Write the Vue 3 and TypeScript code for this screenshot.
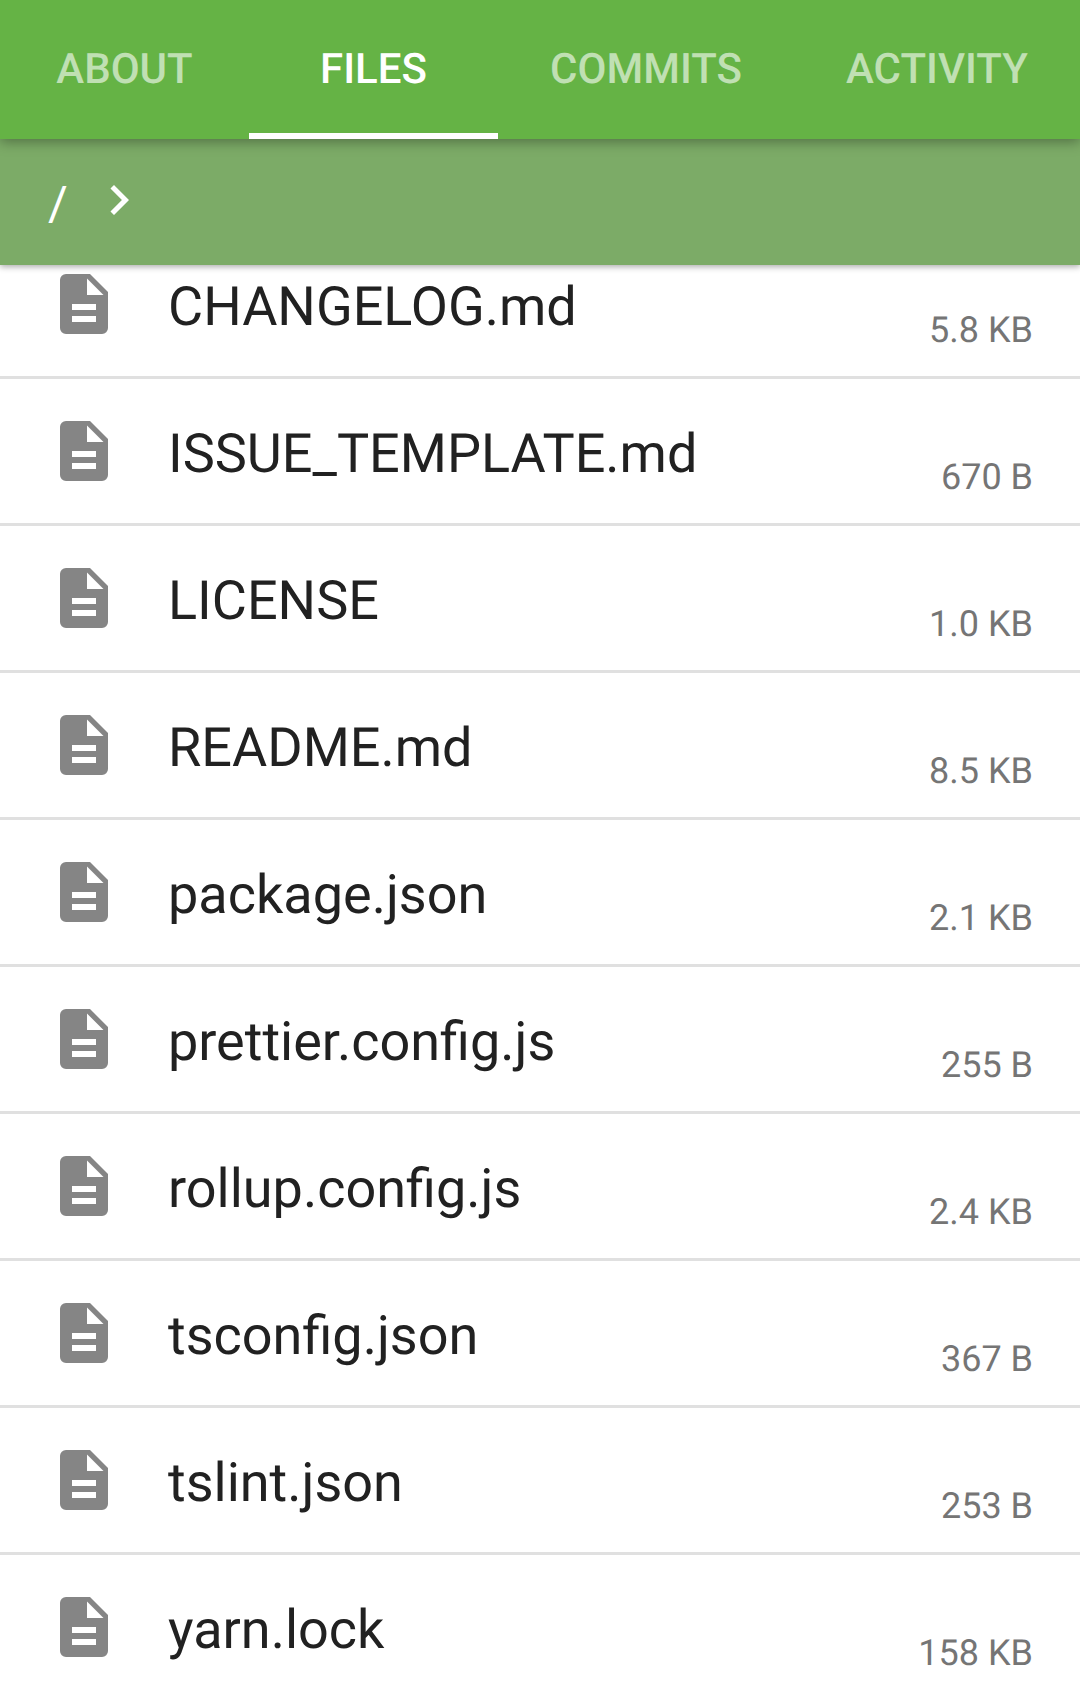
<script setup lang="ts">
interface FileEntry {
  name: string
  size: string
}

const tabs: string[] = ['About', 'Files', 'Commits', 'Activity']
const activeTab = 'Files'

const files: FileEntry[] = [
  { name: 'CHANGELOG.md', size: '5.8 KB' },
  { name: 'ISSUE_TEMPLATE.md', size: '670 B' },
  { name: 'LICENSE', size: '1.0 KB' },
  { name: 'README.md', size: '8.5 KB' },
  { name: 'package.json', size: '2.1 KB' },
  { name: 'prettier.config.js', size: '255 B' },
  { name: 'rollup.config.js', size: '2.4 KB' },
  { name: 'tsconfig.json', size: '367 B' },
  { name: 'tslint.json', size: '253 B' },
  { name: 'yarn.lock', size: '158 KB' },
]
</script>

<template>
  <div class="screen">
    <nav class="tabs">
      <a v-for="tab in tabs" :key="tab" class="tab" :class="{ active: tab === activeTab }">{{ tab }}</a>
    </nav>
    <div class="path">
      <span class="root">/</span>
      <svg class="chevron" viewBox="0 0 24 24"><path d="M10 6L8.59 7.41 13.17 12l-4.58 4.59L10 18l6-6z" /></svg>
    </div>
    <ul class="files">
      <li v-for="file in files" :key="file.name" class="file">
        <svg class="icon" viewBox="0 0 24 24">
          <path fill-rule="evenodd" d="M6 2h8l6 6v12a2 2 0 0 1-2 2H6a2 2 0 0 1-2-2V4a2 2 0 0 1 2-2zM13 3.5V9h5.5zM8 12v2h8v-2zM8 16v2h8v-2z" />
        </svg>
        <span class="name">{{ file.name }}</span>
        <span class="size">{{ file.size }}</span>
      </li>
    </ul>
  </div>
</template>

<style>
body {
  margin: 0;
}
</style>

<style scoped>
.screen {
  display: flex;
  flex-direction: column;
  width: 1080px;
  height: 1699px;
  overflow: hidden;
  background: #fff;
  font-family: Roboto, sans-serif;
  text-rendering: geometricPrecision;
}
.tabs {
  position: relative;
  z-index: 2;
  flex: none;
  display: grid;
  grid-template-columns: 249px 249px 296px 286px;
  height: 139px;
  background: #65b345;
  box-shadow: 0 3px 12px rgba(0, 0, 0, 0.34);
}
.tab {
  box-sizing: border-box;
  border-bottom: 6px solid transparent;
  padding-top: 45px;
  color: rgba(255, 255, 255, 0.6);
  font-size: 42px;
  font-weight: 500;
  line-height: 50px;
  text-align: center;
  text-transform: uppercase;
}
.tab.active {
  color: #fff;
  border-bottom-color: #fff;
}
.path {
  position: relative;
  z-index: 1;
  flex: none;
  display: flex;
  align-items: center;
  height: 126px;
  box-sizing: border-box;
  padding-left: 48px;
  background: #7cab67;
  color: #fff;
  box-shadow: 0 2px 6px rgba(0, 0, 0, 0.32);
}
.root {
  padding-top: 4px;
  font-size: 48px;
  line-height: 56px;
}
.chevron {
  width: 60px;
  height: 60px;
  margin: 0 0 4px 21px;
  fill: #fff;
}
.files {
  flex: none;
  margin: -33px 0 0;
  padding: 0;
  list-style: none;
}
.file {
  display: flex;
  align-items: center;
  height: 144px;
  padding: 0 47px 0 48px;
  border-bottom: 3px solid #e0e0e0;
}
.icon {
  flex: none;
  width: 72px;
  height: 72px;
  fill: #858585;
}
.name {
  flex: 1;
  margin-left: 48px;
  padding-top: 8px;
  color: #212121;
  font-size: 54px;
  line-height: 64px;
}
.size {
  margin-top: 51px;
  color: #757575;
  font-size: 36px;
  line-height: 42px;
}
</style>
